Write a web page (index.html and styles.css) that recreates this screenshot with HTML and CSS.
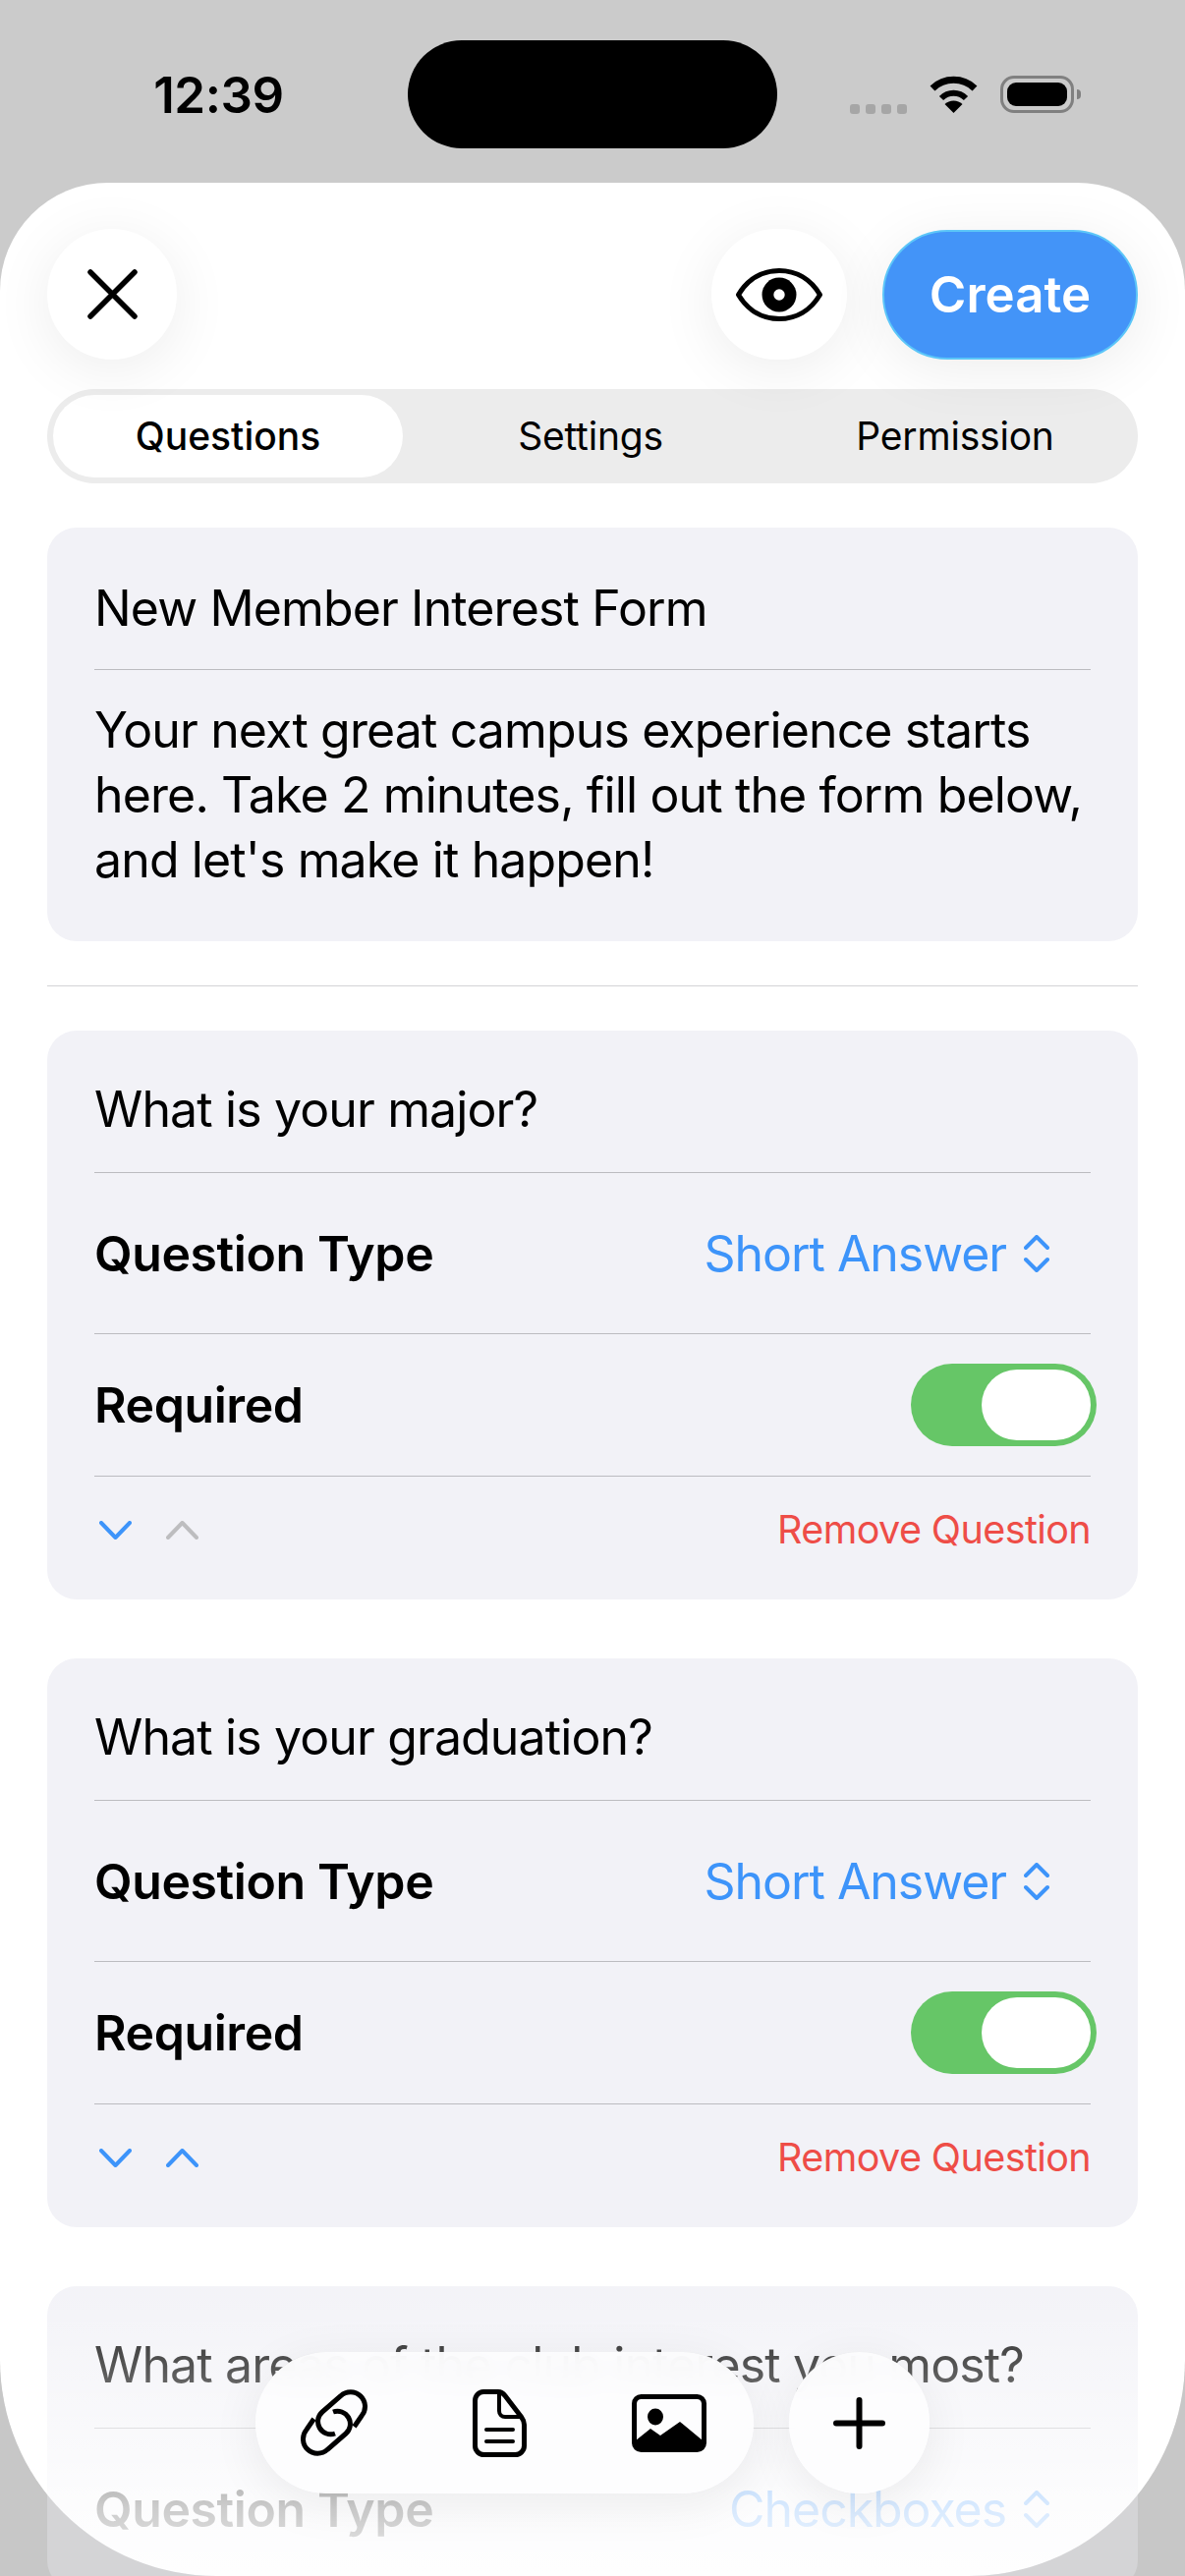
FILE: index.html
```html
<!DOCTYPE html>
<html lang="en">
<head>
<meta charset="utf-8">
<title>New Member Interest Form</title>
<link rel="stylesheet" href="styles.css">
</head>
<body>
<div class="status">
  <div class="time">12:39</div>
  <div class="island"></div>
  <div class="indicators">
    <div class="dots"><i></i><i></i><i></i><i></i></div>
    <svg class="wifi" viewBox="0 0 51 38"><path d="M4 13A31 31 0 0 1 47 13" fill="none" stroke="#000" stroke-width="7"/><path d="M13 23A17.7 17.7 0 0 1 38 23" fill="none" stroke="#000" stroke-width="6"/><path d="M25.500 38L16.500 29A13 13 0 0 1 34.500 29Z"/></svg>
    <div class="battery"><div class="battery-fill"></div></div>
  </div>
</div>
<main class="sheet">
  <header class="top">
    <button class="round close"><svg class="ico-x" viewBox="0 0 51 51"><path d="M3 3L48 48M48 3L3 48" fill="none" stroke="#000" stroke-width="5.500" stroke-linecap="round"/></svg></button>
    <button class="round eye"><svg class="ico-eye" viewBox="0 0 88 54"><path d="M2.500 27C12 11 27 2.500 44 2.500S76 11 85.500 27C76 43 61 51.500 44 51.500S12 43 2.500 27Z" fill="none" stroke="#000" stroke-width="5" stroke-linejoin="round"/><circle cx="44" cy="27" r="17.500"/><circle cx="44" cy="27" r="5.700" fill="#fff"/></svg></button>
    <button class="create">Create</button>
  </header>
  <nav class="seg">
    <div class="tab tab-on">Questions</div>
    <div class="tab">Settings</div>
    <div class="tab">Permission</div>
  </nav>
  <section class="card intro">
    <div class="row title intro-title">New Member Interest Form</div>
    <p class="desc">Your next great campus experience starts here. Take 2 minutes, fill out the form below, and let's make it happen!</p>
  </section>
  <hr class="sep">
  <div class="list">
    <section class="card">
      <div class="row title">What is your major?</div>
      <div class="row type"><span class="label">Question Type</span><span class="picker">Short Answer<svg class="updown" viewBox="0 0 26 38"><path d="M2 13L13 2L24 13M2 25L13 36L24 25" fill="none" stroke="#3d94fa" stroke-width="4" stroke-linecap="round" stroke-linejoin="round"/></svg></span></div>
      <div class="row req"><span class="label">Required</span><span class="toggle"><span class="thumb"></span></span></div>
      <div class="foot"><span class="arrows"><svg class="chev" viewBox="0 0 33 19"><path d="M2 2L16.500 17L31 2" fill="none" stroke="#3d94fa" stroke-width="4" stroke-linecap="round" stroke-linejoin="round"/></svg><svg class="chev" viewBox="0 0 33 19"><path d="M2 17L16.500 2L31 17" fill="none" stroke="#bdbdbf" stroke-width="4" stroke-linecap="round" stroke-linejoin="round"/></svg></span><span class="remove">Remove Question</span></div>
    </section>
    <section class="card">
      <div class="row title">What is your graduation?</div>
      <div class="row type"><span class="label">Question Type</span><span class="picker">Short Answer<svg class="updown" viewBox="0 0 26 38"><path d="M2 13L13 2L24 13M2 25L13 36L24 25" fill="none" stroke="#3d94fa" stroke-width="4" stroke-linecap="round" stroke-linejoin="round"/></svg></span></div>
      <div class="row req"><span class="label">Required</span><span class="toggle"><span class="thumb"></span></span></div>
      <div class="foot"><span class="arrows"><svg class="chev" viewBox="0 0 33 19"><path d="M2 2L16.500 17L31 2" fill="none" stroke="#3d94fa" stroke-width="4" stroke-linecap="round" stroke-linejoin="round"/></svg><svg class="chev" viewBox="0 0 33 19"><path d="M2 17L16.500 2L31 17" fill="none" stroke="#3d94fa" stroke-width="4" stroke-linecap="round" stroke-linejoin="round"/></svg></span><span class="remove">Remove Question</span></div>
    </section>
    <section class="card">
      <div class="row title">What areas of the club interest you most?</div>
      <div class="row type"><span class="label">Question Type</span><span class="picker">Checkboxes<svg class="updown" viewBox="0 0 26 38"><path d="M2 13L13 2L24 13M2 25L13 36L24 25" fill="none" stroke="#3d94fa" stroke-width="4" stroke-linecap="round" stroke-linejoin="round"/></svg></span></div>
    </section>
  </div>
</main>
<div class="fade"></div>
<div class="corner-mask"></div>
<div class="dock">
  <div class="pill">
    <svg class="ico-link" viewBox="0 0 68 68"><g fill="none" stroke="#000" stroke-width="5"><path d="M54.500 38L62 27A14.700 14.700 0 0 0 40.750 6.750L22 23A13 13 0 0 0 35 45"/><path d="M13.500 30L6 41A14.700 14.700 0 0 0 27.250 61.250L46 45A13 13 0 0 0 33 23"/></g></svg>
    <svg class="ico-doc" viewBox="0 0 55 69"><path d="M11 2.500H26Q30 2.500 33 6.500L49.500 28Q52.500 32 52.500 36V57.500A9 9 0 0 1 43.500 66.500H11.500A9 9 0 0 1 2.500 57.500V11.500A9 9 0 0 1 11 2.500Z" fill="none" stroke="#000" stroke-width="5"/><path d="M27 3V22A6 6 0 0 0 33 28H51" fill="none" stroke="#000" stroke-width="4"/><path d="M14 41H41M14 53H41" fill="none" stroke="#000" stroke-width="4" stroke-linecap="round"/></svg>
    <svg class="ico-img" viewBox="0 0 76 59"><rect x="2.500" y="2.500" width="71" height="54" rx="7" fill="none" stroke="#000" stroke-width="5"/><ellipse cx="24" cy="23" rx="8" ry="8.500"/><path d="M4 47L19 35L29 42L49 28L72 47V50A7 7 0 0 1 65 57H11A7 7 0 0 1 4 50Z"/></svg>
  </div>
  <div class="plus"><svg class="ico-plus" viewBox="0 0 53 53"><path d="M26.500 3V50M3 26.500H50" fill="none" stroke="#000" stroke-width="6" stroke-linecap="round"/></svg></div>
</div>
</body>
</html>
```
FILE: styles.css
```css
* { box-sizing: border-box; }
html, body { margin: 0; padding: 0; }
body {
  position: relative;
  width: 1206px;
  height: 2622px;
  overflow: hidden;
  background: #cbcbcb;
  font-family: Inter, "Liberation Sans", sans-serif;
  color: #000;
}
.status {
  display: grid;
  grid-template-columns: 1fr 376px 1fr;
  height: 186px;
  padding-top: 41px;
  align-items: start;
}
.time {
  height: 110px;
  line-height: 112px;
  font-size: 51px;
  font-weight: 600;
  letter-spacing: -.4px;
  text-align: center;
  padding-left: 30px;
}
.island { height: 110px; border-radius: 55px; background: #000; }
.indicators {
  display: flex;
  align-items: center;
  gap: 22px;
  height: 110px;
  padding-left: 74px;
}
.dots { display: flex; gap: 6px; margin-top: 30px; }
.dots i { width: 10px; height: 10px; border-radius: 3px; background: #a6a6a6; }
.wifi { width: 51px; height: 38px; }
.battery {
  position: relative;
  width: 75px;
  height: 38px;
  padding: 4px;
  border: 3px solid #808080;
  border-radius: 14px;
}
.battery::after {
  content: "";
  position: absolute;
  right: -10px;
  top: 11px;
  width: 4px;
  height: 10px;
  border-radius: 0 4px 4px 0;
  background: #808080;
}
.battery-fill { height: 100%; border-radius: 9px; background: #000; }

.sheet {
  height: 2436px;
  padding: 47px 48px 0;
  border-radius: 110px 110px 220px 220px;
  background: #fff;
}
.top {
  position: relative;
  z-index: 1;
  display: flex;
  align-items: center;
  height: 133px;
}
.round {
  display: flex;
  align-items: center;
  justify-content: center;
  height: 133px;
  padding: 0;
  border: 0;
  border-radius: 66px;
  background: #fff;
  box-shadow: 0 10px 60px rgba(0, 0, 0, .075);
}
.close { width: 132px; margin-right: auto; }
.eye { width: 138px; margin-right: 36px; }
.ico-x { width: 51px; height: 51px; }
.ico-eye { width: 88px; height: 54px; }
.create {
  width: 260px;
  height: 132px;
  padding: 0;
  border: 2px solid #5cc6f8;
  border-radius: 66px;
  background: #4394f8;
  box-shadow: 0 10px 60px rgba(0, 0, 0, .075);
  color: #fff;
  font-family: inherit;
  font-size: 51px;
  font-weight: 600;
}
.seg {
  display: grid;
  grid-template-columns: 356px 382px 1fr;
  align-items: center;
  height: 96px;
  margin-top: 30px;
  padding: 6px;
  border-radius: 48px;
  background: #ececec;
}
.tab { text-align: center; font-size: 39px; font-weight: 400; letter-spacing: -.2px; line-height: 84px; }
.tab-on { border-radius: 42px; background: #fff; font-weight: 500; letter-spacing: 0; }

.card { border-radius: 30px; background: #f2f2f7; padding: 0 48px; }
.intro { height: 421px; margin-top: 45px; }
.row { display: flex; align-items: center; border-bottom: 1px solid #bcbcc0; }
.title { height: 145px; padding-top: 15px; font-size: 50px; letter-spacing: -.87px; }
.intro-title { padding-top: 20px; }
.desc { margin: 0; padding-top: 28px; font-size: 50px; letter-spacing: -.87px; line-height: 66px; }
.sep { height: 1px; margin: 45px 0; border: 0; background: #d4d4d6; }
.list { display: flex; flex-direction: column; gap: 60px; }
.type { justify-content: space-between; height: 164px; }
.req { justify-content: space-between; height: 145px; }
.label { font-size: 50px; font-weight: 600; letter-spacing: -.42px; }
.picker { display: flex; align-items: center; gap: 18px; padding-right: 42px; color: #3d94fa; font-size: 50px; letter-spacing: -1.05px; }
.updown { width: 26px; height: 38px; }
.toggle {
  display: block;
  width: 189px;
  height: 84px;
  margin-right: -6px;
  padding: 6px;
  border-radius: 42px;
  background: #66c667;
}
.thumb { display: block; width: 111px; height: 72px; margin-left: 66px; border-radius: 36px; background: #fff; }
.foot { display: flex; align-items: center; justify-content: space-between; height: 125px; padding-bottom: 17px; }
.arrows { display: flex; gap: 35px; padding-left: 5px; }
.chev { width: 33px; height: 19px; }
.remove { color: #ee4d47; font-size: 39.5px; letter-spacing: -.6px; }

.fade {
  position: absolute;
  left: 0;
  right: 0;
  bottom: 0;
  height: 317px;
  border-radius: 0 0 220px 220px;
  background: linear-gradient(rgba(255, 255, 255, 0), rgba(255, 255, 255, .8) 78%, rgba(255, 255, 255, .93));
}
.corner-mask {
  position: absolute;
  left: 0;
  right: 0;
  bottom: 0;
  height: 220px;
  overflow: hidden;
}
.corner-mask::after {
  content: "";
  position: absolute;
  inset: 0;
  border-radius: 0 0 220px 220px;
  box-shadow: 0 0 0 240px rgba(198, 198, 198, .68);
}
.dock {
  position: absolute;
  left: 0;
  right: 0;
  bottom: 84px;
  display: flex;
  justify-content: center;
  gap: 36px;
}
.pill, .plus {
  display: flex;
  align-items: center;
  height: 144px;
  border-radius: 72px;
  background: rgba(253, 253, 254, .94);
  backdrop-filter: blur(14px);
  box-shadow: 0 10px 50px rgba(0, 0, 0, .07);
}
.pill { width: 507px; gap: 107px; padding-left: 46px; }
.plus { justify-content: center; width: 143px; }
.ico-link { width: 68px; height: 68px; }
.ico-doc { width: 55px; height: 69px; }
.ico-img { width: 76px; height: 59px; }
.ico-plus { width: 53px; height: 53px; }
```
